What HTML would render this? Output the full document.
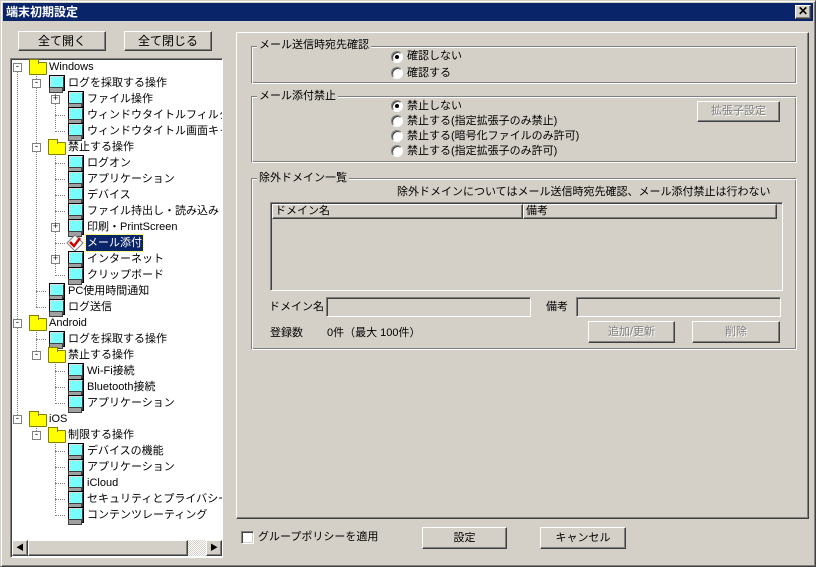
<!DOCTYPE html>
<html><head><meta charset="utf-8"><style>
*{box-sizing:border-box;margin:0;padding:0}
body{width:816px;height:567px;background:#d4d0c8;font-family:"Liberation Sans","Noto Sans CJK JP",sans-serif;font-size:11px;color:#000;position:relative;overflow:hidden}
.a{position:absolute;white-space:nowrap;line-height:14px}
.win{position:absolute;left:0;top:0;width:816px;height:567px;border:1px solid;border-color:#d4d0c8 #404040 #404040 #d4d0c8;box-shadow:inset 1px 1px #fff,inset -1px -1px #808080}
.title{position:absolute;left:3px;top:3px;width:810px;height:18px;background:#0a246a;color:#fff;font-weight:bold;font-size:12px;line-height:18px;padding-left:3px}
.btn{position:absolute;border:1px solid;border-color:#fff #404040 #404040 #fff;box-shadow:inset -1px -1px #808080;text-align:center;background:#d4d0c8}
.dis{color:#808080;text-shadow:1px 1px #fff}
.sunk{position:absolute;border:1px solid;border-color:#808080 #fff #fff #808080;box-shadow:inset 1px 1px #404040,inset -1px -1px #d4d0c8}
.grp{position:absolute;border:1px solid;border-color:#808080 #fff #fff #808080;box-shadow:inset 1px 1px #fff,inset -1px -1px #808080}
.gt{position:absolute;background:#d4d0c8;padding:0 2px;line-height:14px}
.rad{position:absolute;width:12px;height:12px;border-radius:50%;background:#fff;border:1px solid;border-color:#808080 #fff #fff #808080;box-shadow:inset 1px 1px #404040}
.rad.on::after{content:"";position:absolute;left:3px;top:3px;width:4px;height:4px;border-radius:50%;background:#000}
#tree{position:absolute;left:10px;top:58px;width:213px;height:500px;background:#fff;border:1px solid;border-color:#808080 #fff #fff #808080;box-shadow:inset 1px 1px #404040;overflow:hidden}
.r{position:absolute;height:16px;line-height:16px;white-space:nowrap}
.ex{position:absolute;width:9px;height:9px;border:1px solid #808080;background:#fff;font-size:9px;line-height:7px;text-align:center;font-family:"Liberation Mono",monospace}
.pc{position:absolute;width:14px;height:16px}
.pc::before{content:"";position:absolute;left:1px;top:0;width:12px;height:12px;background:#7ff;border:2px solid;border-color:#e0e0e0 #404040 #404040 #e0e0e0;outline:1px solid #000;outline-offset:-1px}
.pc::after{content:"";position:absolute;left:1px;top:12px;width:12px;height:4px;background:#a0a0a0;border:1px solid #404040}
.fd{position:absolute;width:18px;height:13px;background:#ff0;border:1px solid #808000;border-radius:1px}
.fd::before{content:"";position:absolute;left:-1px;top:-4px;width:8px;height:4px;background:#ff0;border:1px solid #808000;border-bottom:none}
.vl{position:absolute;width:1px;border-left:1px dotted #808080}
.hl{position:absolute;height:1px;border-top:1px dotted #808080}
</style></head><body>
<div class="win"></div>
<div class="title">端末初期設定</div>
<div class="btn" style="left:795px;top:5px;width:16px;height:14px;font-size:12px;line-height:11px;font-weight:bold">✕</div>

<div class="btn" style="left:18px;top:31px;width:88px;height:20px;line-height:18px;font-size:12px">全て開く</div>
<div class="btn" style="left:124px;top:31px;width:88px;height:20px;line-height:18px;font-size:12px">全て閉じる</div>

<div id="tree">
<div class="vl" style="left:6px;top:12px;height:352px"></div>
<div class="vl" style="left:25px;top:14px;height:234px"></div>
<div class="vl" style="left:44px;top:30px;height:40px"></div>
<div class="vl" style="left:44px;top:94px;height:120px"></div>
<div class="vl" style="left:25px;top:270px;height:24px"></div>
<div class="vl" style="left:44px;top:302px;height:40px"></div>
<div class="vl" style="left:25px;top:366px;height:8px"></div>
<div class="vl" style="left:44px;top:382px;height:72px"></div>

<div class="hl" style="left:25px;top:232px;width:10px"></div>
<div class="hl" style="left:25px;top:248px;width:10px"></div>
<div class="hl" style="left:25px;top:280px;width:10px"></div>
<div class="hl" style="left:44px;top:56px;width:10px"></div>
<div class="hl" style="left:44px;top:72px;width:10px"></div>
<div class="hl" style="left:44px;top:104px;width:10px"></div>
<div class="hl" style="left:44px;top:120px;width:10px"></div>
<div class="hl" style="left:44px;top:136px;width:10px"></div>
<div class="hl" style="left:44px;top:152px;width:10px"></div>
<div class="hl" style="left:44px;top:184px;width:10px"></div>
<div class="hl" style="left:44px;top:216px;width:10px"></div>
<div class="hl" style="left:44px;top:312px;width:10px"></div>
<div class="hl" style="left:44px;top:328px;width:10px"></div>
<div class="hl" style="left:44px;top:344px;width:10px"></div>
<div class="hl" style="left:44px;top:392px;width:10px"></div>
<div class="hl" style="left:44px;top:408px;width:10px"></div>
<div class="hl" style="left:44px;top:424px;width:10px"></div>
<div class="hl" style="left:44px;top:440px;width:10px"></div>
<div class="hl" style="left:44px;top:456px;width:10px"></div>

<div class="ex" style="left:2px;top:4px">-</div><div class="fd" style="left:18px;top:3px"></div><div class="r" style="left:38px;top:0">Windows</div>
<div class="ex" style="left:21px;top:20px">-</div><div class="pc" style="left:37px;top:16px"></div><div class="r" style="left:57px;top:16px">ログを採取する操作</div>
<div class="ex" style="left:40px;top:36px">+</div><div class="pc" style="left:56px;top:32px"></div><div class="r" style="left:76px;top:32px">ファイル操作</div>
<div class="pc" style="left:56px;top:48px"></div><div class="r" style="left:76px;top:48px">ウィンドウタイトルフィルタ</div>
<div class="pc" style="left:56px;top:64px"></div><div class="r" style="left:76px;top:64px">ウィンドウタイトル画面キャプチャ</div>
<div class="ex" style="left:21px;top:84px">-</div><div class="fd" style="left:37px;top:83px"></div><div class="r" style="left:57px;top:80px">禁止する操作</div>
<div class="pc" style="left:56px;top:96px"></div><div class="r" style="left:76px;top:96px">ログオン</div>
<div class="pc" style="left:56px;top:112px"></div><div class="r" style="left:76px;top:112px">アプリケーション</div>
<div class="pc" style="left:56px;top:128px"></div><div class="r" style="left:76px;top:128px">デバイス</div>
<div class="pc" style="left:56px;top:144px"></div><div class="r" style="left:76px;top:144px">ファイル持出し・読み込み</div>
<div class="ex" style="left:40px;top:164px">+</div><div class="pc" style="left:56px;top:160px"></div><div class="r" style="left:76px;top:160px">印刷・PrintScreen</div>
<svg style="position:absolute;left:55px;top:175px" width="18" height="18"><path d="M9 1L17 9L9 17L1 9Z" fill="#fff" stroke="#808080"/><path d="M4 8L8 12L14 4" fill="none" stroke="#c00" stroke-width="2.5"/></svg><div class="r" style="left:75px;top:176px;background:#0a246a;color:#fff;padding:0 1px;outline:1px dotted #ff0">メール添付</div>
<div class="ex" style="left:40px;top:196px">+</div><div class="pc" style="left:56px;top:192px"></div><div class="r" style="left:76px;top:192px">インターネット</div>
<div class="pc" style="left:56px;top:208px"></div><div class="r" style="left:76px;top:208px">クリップボード</div>
<div class="pc" style="left:37px;top:224px"></div><div class="r" style="left:57px;top:224px">PC使用時間通知</div>
<div class="pc" style="left:37px;top:240px"></div><div class="r" style="left:57px;top:240px">ログ送信</div>
<div class="ex" style="left:2px;top:260px">-</div><div class="fd" style="left:18px;top:259px"></div><div class="r" style="left:38px;top:256px">Android</div>
<div class="pc" style="left:37px;top:272px"></div><div class="r" style="left:57px;top:272px">ログを採取する操作</div>
<div class="ex" style="left:21px;top:292px">-</div><div class="fd" style="left:37px;top:291px"></div><div class="r" style="left:57px;top:288px">禁止する操作</div>
<div class="pc" style="left:56px;top:304px"></div><div class="r" style="left:76px;top:304px">Wi-Fi接続</div>
<div class="pc" style="left:56px;top:320px"></div><div class="r" style="left:76px;top:320px">Bluetooth接続</div>
<div class="pc" style="left:56px;top:336px"></div><div class="r" style="left:76px;top:336px">アプリケーション</div>
<div class="ex" style="left:2px;top:356px">-</div><div class="fd" style="left:18px;top:355px"></div><div class="r" style="left:38px;top:352px">iOS</div>
<div class="ex" style="left:21px;top:372px">-</div><div class="fd" style="left:37px;top:371px"></div><div class="r" style="left:57px;top:368px">制限する操作</div>
<div class="pc" style="left:56px;top:384px"></div><div class="r" style="left:76px;top:384px">デバイスの機能</div>
<div class="pc" style="left:56px;top:400px"></div><div class="r" style="left:76px;top:400px">アプリケーション</div>
<div class="pc" style="left:56px;top:416px"></div><div class="r" style="left:76px;top:416px">iCloud</div>
<div class="pc" style="left:56px;top:432px"></div><div class="r" style="left:76px;top:432px">セキュリティとプライバシー</div>
<div class="pc" style="left:56px;top:448px"></div><div class="r" style="left:76px;top:448px">コンテンツレーティング</div>

<div style="position:absolute;left:1px;top:481px;width:210px;height:16px;background:repeating-conic-gradient(#fff 0 25%,#d4d0c8 0 50%) 0 0/2px 2px"></div>
<div class="btn" style="left:1px;top:481px;width:16px;height:16px;font-size:8px;line-height:14px">◀</div>
<div class="btn" style="left:17px;top:481px;width:160px;height:16px"></div>
<div class="btn" style="left:195px;top:481px;width:16px;height:16px;font-size:8px;line-height:14px">▶</div>
</div>

<div style="position:absolute;left:236px;top:32px;width:573px;height:487px;border:1px solid;border-color:#fff #404040 #404040 #fff;box-shadow:inset -1px -1px #808080"></div>

<div class="grp" style="left:251px;top:46px;width:546px;height:38px"></div>
<div class="gt" style="left:257px;top:38px">メール送信時宛先確認</div>
<div class="rad on" style="left:391px;top:51px"></div><div class="a" style="left:407px;top:49px">確認しない</div>
<div class="rad" style="left:391px;top:67px"></div><div class="a" style="left:407px;top:66px">確認する</div>

<div class="grp" style="left:251px;top:96px;width:546px;height:67px"></div>
<div class="gt" style="left:257px;top:89px">メール添付禁止</div>
<div class="rad on" style="left:391px;top:100px"></div><div class="a" style="left:407px;top:99px">禁止しない</div>
<div class="rad" style="left:391px;top:115px"></div><div class="a" style="left:407px;top:114px">禁止する(指定拡張子のみ禁止)</div>
<div class="rad" style="left:391px;top:130px"></div><div class="a" style="left:407px;top:129px">禁止する(暗号化ファイルのみ許可)</div>
<div class="rad" style="left:391px;top:145px"></div><div class="a" style="left:407px;top:144px">禁止する(指定拡張子のみ許可)</div>
<div class="btn dis" style="left:697px;top:101px;width:83px;height:21px;line-height:19px">拡張子設定</div>

<div class="grp" style="left:251px;top:178px;width:546px;height:172px"></div>
<div class="gt" style="left:257px;top:171px">除外ドメイン一覧</div>
<div class="a" style="left:397px;top:185px">除外ドメインについてはメール送信時宛先確認、メール添付禁止は行わない</div>
<div class="sunk" style="left:270px;top:202px;width:513px;height:89px"></div>
<div class="btn" style="left:272px;top:204px;width:251px;height:15px;line-height:13px;text-align:left;padding-left:2px">ドメイン名</div>
<div class="btn" style="left:523px;top:204px;width:254px;height:15px;line-height:13px;text-align:left;padding-left:2px">備考</div>
<div class="a" style="left:269px;top:300px">ドメイン名</div>
<div class="sunk" style="left:326px;top:297px;width:205px;height:20px"></div>
<div class="a" style="left:546px;top:300px">備考</div>
<div class="sunk" style="left:576px;top:297px;width:205px;height:20px"></div>
<div class="a" style="left:270px;top:326px">登録数</div>
<div class="a" style="left:327px;top:326px">0件（最大 100件）</div>
<div class="btn dis" style="left:588px;top:321px;width:87px;height:22px;line-height:20px">追加/更新</div>
<div class="btn dis" style="left:692px;top:321px;width:88px;height:22px;line-height:20px">削除</div>

<div class="sunk" style="left:241px;top:531px;width:13px;height:13px;background:#fff"></div>
<div class="a" style="left:258px;top:530px">グループポリシーを適用</div>
<div class="btn" style="left:422px;top:527px;width:85px;height:22px;line-height:20px">設定</div>
<div class="btn" style="left:540px;top:527px;width:86px;height:22px;line-height:20px">キャンセル</div>
</body></html>
